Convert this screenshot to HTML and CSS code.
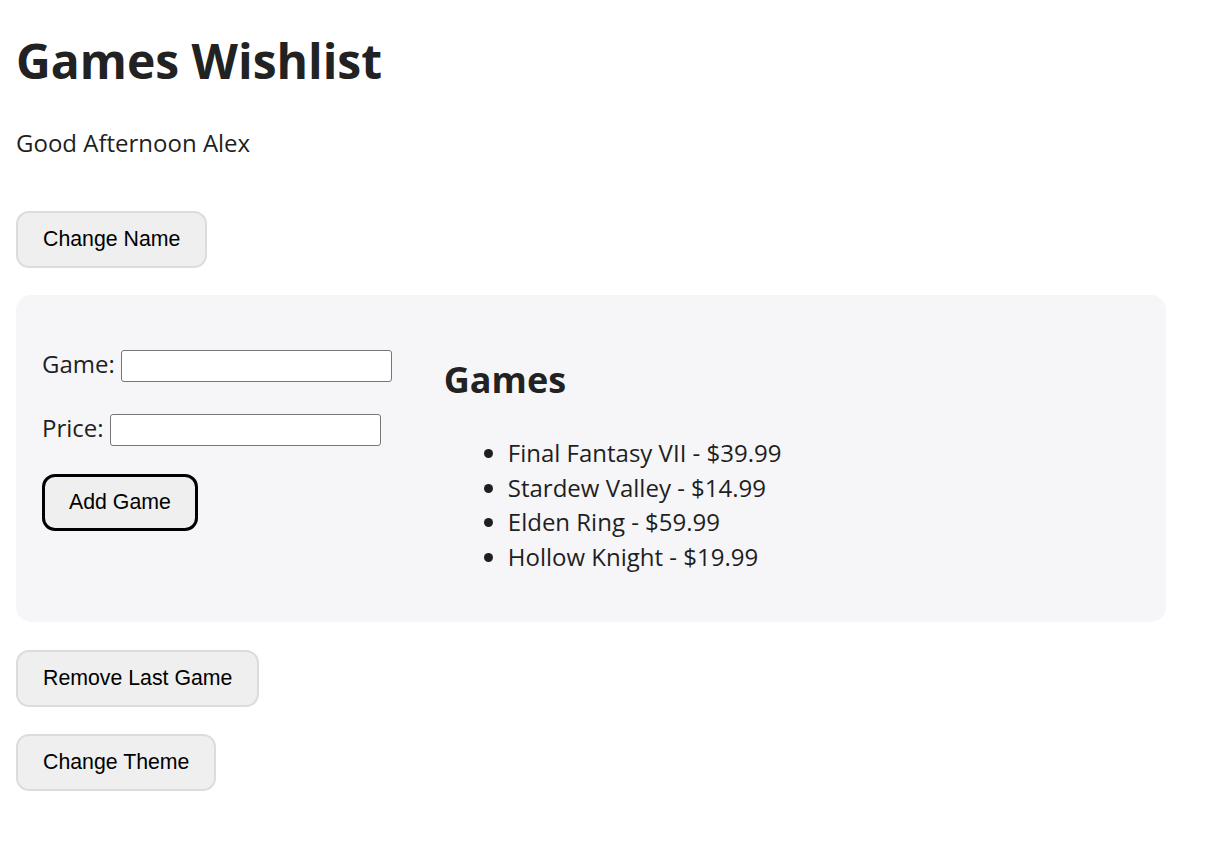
FILE: index.html
```html
<!DOCTYPE html>
<html lang="en">
<head>
<meta charset="utf-8">
<title>Games Wishlist</title>
<link rel="stylesheet" href="styles.css">
</head>
<body>
<main class="page">
  <h1 class="title">Games Wishlist</h1>
  <p class="greeting">Good Afternoon Alex</p>
  <button class="btn btn-name">Change Name</button>

  <section class="panel">
    <form class="add-form">
      <div class="field">
        <label for="game">Game:</label>
        <input id="game" type="text" class="text-input">
      </div>
      <div class="field">
        <label for="price">Price:</label>
        <input id="price" type="text" class="text-input">
      </div>
      <button type="button" class="btn btn-add">Add Game</button>
    </form>
    <div class="games">
      <h2 class="games-title">Games</h2>
      <ul class="games-list">
        <li>Final Fantasy VII - $39.99</li>
        <li>Stardew Valley - $14.99</li>
        <li>Elden Ring - $59.99</li>
        <li>Hollow Knight - $19.99</li>
      </ul>
    </div>
  </section>

  <div class="actions">
    <button class="btn">Remove Last Game</button>
    <button class="btn">Change Theme</button>
  </div>
</main>
</body>
</html>
```

FILE: styles.css
```css
html, body {
  margin: 0;
  padding: 0;
  background: #ffffff;
}

body {
  font-family: "Open Sans", "Noto Sans", sans-serif;
  color: #1f1f1f;
}

.page {
  padding: 32px 16px 40px;
  display: flex;
  flex-direction: column;
  align-items: flex-start;
}

.title {
  margin: 0;
  font-size: 48px;
  line-height: 58px;
  font-weight: 700;
  color: #222;
}

.greeting {
  margin: 37px 0 0;
  font-size: 24px;
  line-height: 32px;
}

.btn {
  font-family: "Liberation Sans", Arial, sans-serif;
  font-size: 21.3px;
  color: #000;
  background: #efefef;
  border: 2px solid #dcdcdc;
  border-radius: 13px;
  height: 57px;
  padding: 0 25px;
  cursor: pointer;
}

.btn-name {
  margin-top: 52px;
}

.panel {
  margin-top: 27px;
  align-self: stretch;
  width: 1150px;
  box-sizing: border-box;
  background: #f6f6f8;
  border-radius: 15px;
  padding: 26px;
  height: 327px;
  display: flex;
  align-items: flex-start;
  gap: 52px;
}

.add-form {
  display: flex;
  flex-direction: column;
  align-items: flex-start;
  margin-top: 29px;
}

.field {
  display: flex;
  align-items: center;
  font-size: 24px;
  line-height: 32px;
  margin-bottom: 32px;
}

.field label {
  margin-right: 6px;
  position: relative;
  top: -2px;
}

.text-input {
  width: 271px;
  height: 32px;
  box-sizing: border-box;
  border: 1px solid #767676;
  border-radius: 3px;
  background: #fff;
  padding: 1px 3px;
  font-size: 20px;
}

.btn-add {
  margin-top: -4px;
  border: 3px solid #000;
  padding: 0 24px;
}

.games-title {
  margin: 37px 0 0;
  font-size: 36px;
  line-height: 44px;
  font-weight: 700;
  color: #222;
}

.games-list {
  margin: 34px 0 0;
  padding-left: 64px;
  font-size: 24px;
  line-height: 34.5px;
}

.actions {
  margin-top: 28px;
  display: flex;
  flex-direction: column;
  align-items: flex-start;
  gap: 27px;
}
```
